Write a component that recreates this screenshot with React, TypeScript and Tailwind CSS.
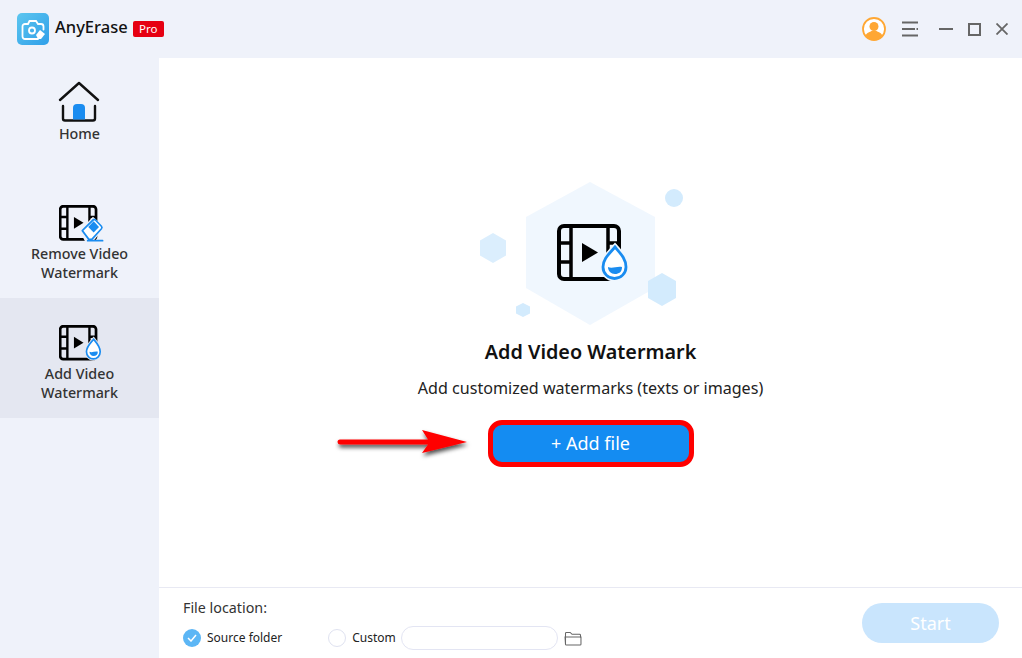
const FONT = "font-['Noto_Sans','Open_Sans',sans-serif]";

function FilmBase({ stroke = 4 }: { stroke?: number }) {
  return (
    <g>
      <rect x="2" y="2" width="60" height="53" rx="5" fill="none" stroke="#000" strokeWidth={stroke} />
      <path d="M14 2v53M51 2v53M2 19h12M2 38h12M51 19h11" stroke="#000" strokeWidth={stroke - 0.5} fill="none" />
      <path d="M25 19l16 9.500L25 38z" fill="#000" />
    </g>
  );
}

function Drop({ hole }: { hole: string }) {
  return (
    <g>
      <path
        d="M58 23c6 7 11 12 11 20a11.500 11.500 0 0 1-23 0c0-8 6-13 12-20z"
        fill={hole}
        stroke={hole}
        strokeWidth="6"
      />
      <path
        d="M58 23c6 7 11 12 11 20a11.500 11.500 0 0 1-23 0c0-8 6-13 12-20z"
        fill="#fff"
        stroke="#1a8cf0"
        strokeWidth="2.800"
      />
      <path d="M51 43c4 2 9-1 14 0c0 5-3 7-7 7s-7-3-7-7z" fill="#1a8cf0" />
    </g>
  );
}

function HomeIcon() {
  return (
    <svg width="42" height="42" viewBox="0 0 42 42" fill="none" className="shrink-0 -translate-x-[1px]">
      <path d="M2 19L21 2l19 17" stroke="#111" strokeWidth="2.400" strokeLinecap="round" strokeLinejoin="round" />
      <path d="M5 25v12.500a2 2 0 0 0 2 2h28a2 2 0 0 0 2-2V25" stroke="#111" strokeWidth="2.400" strokeLinecap="round" />
      <path d="M15 38.500V27a4 4 0 0 1 4-4h4a4 4 0 0 1 4 4v11.500z" fill="#1a8cf0" />
    </svg>
  );
}

function RemoveIcon() {
  return (
    <svg width="46" height="40" viewBox="0 0 77 64" fill="none" preserveAspectRatio="none" className="shrink-0">
      <FilmBase stroke={4.500} />
      <path d="M38 42l19-19 15 13-17 20H46z" fill="#eff2fa" stroke="#eff2fa" strokeWidth="6" />
      <path d="M39 41l18-17a3 3 0 0 1 4 0l10 10a3 3 0 0 1 0 4L55 55h-5z" fill="#fff" stroke="#1a8cf0" strokeWidth="2.800" strokeLinejoin="round" />
      <path d="M49 35l9-9 9 9-9 9z" fill="#1a8cf0" />
      <path d="M48 57h25" stroke="#1a8cf0" strokeWidth="2.800" strokeLinecap="round" />
    </svg>
  );
}

function AddIcon({ hole, big }: { hole: string; big?: boolean }) {
  return (
    <svg
      width={big ? 72 : 43}
      height={big ? 66 : 41}
      viewBox="0 0 72 66"
      fill="none"
      preserveAspectRatio="none"
      className={big ? "absolute left-[87px] top-[49px]" : "shrink-0"}
    >
      <FilmBase stroke={big ? 4 : 4.500} />
      <Drop hole={hole} />
    </svg>
  );
}

function Illustration() {
  return (
    <div className="relative mr-[22px] h-[155px] w-[220px]">
      <svg width="220" height="155" viewBox="0 0 220 155" className="absolute left-0 top-0">
        <path d="M120 7l65 35v71l-65 37-64-37V42z" fill="#f0f7fe" />
        <path d="M23 58l13 7.500v15L23 88l-13-7.500v-15z" fill="#dbeefd" />
        <path d="M53 128l7 3.500v7L53 142l-7-3.500v-7z" fill="#d3ebfd" />
        <path d="M192 98l14 8v17l-14 8-14-8v-17z" fill="#d3ebfd" />
        <circle cx="204" cy="23" r="9" fill="#d3ebfd" />
      </svg>
      <AddIcon hole="#f0f7fe" big />
    </div>
  );
}

function NavItem({ label, icon, active, top }: { label: string[]; icon: React.ReactNode; active?: boolean; top: string }) {
  return (
    <div className={`flex h-[120px] flex-col items-center pt-[22px] ${active ? "bg-[#e4e7f1]" : ""}`}>
      <div className={`flex h-[44px] w-[41px] items-start ${top}`}>{icon}</div>
      <div className="text-center text-[14.300px] leading-[19px] font-medium text-[#333]">
        {label.map((l) => (
          <div key={l}>{l}</div>
        ))}
      </div>
    </div>
  );
}

export default function App() {
  return (
    <div className={`relative flex h-[658px] w-[1022px] flex-col overflow-hidden bg-[#eff2fa] ${FONT}`}>
      {/* Title bar */}
      <div className="flex h-[58px] shrink-0 items-center justify-between pl-[17px] pr-[14px]">
        <div className="flex items-center">
          <svg width="32" height="32" viewBox="0 0 32 32" fill="none">
            <defs>
              <linearGradient id="logo" x1="0" y1="0" x2="1" y2="1">
                <stop offset="0" stopColor="#5cc6ef" />
                <stop offset="1" stopColor="#2f9fe9" />
              </linearGradient>
            </defs>
            <rect width="32" height="32" rx="5" fill="url(#logo)" />
            <path
              d="M21 26H8a2.500 2.500 0 0 1-2.500-2.500v-10A2.500 2.500 0 0 1 8 11h3l1.500-3h6.500l2 3h3a2.500 2.500 0 0 1 2.500 2.500v3"
              stroke="#fff"
              strokeWidth="1.800"
              strokeLinecap="round"
            />
            <circle cx="15" cy="17.500" r="3" stroke="#fff" strokeWidth="1.800" />
            <path d="M19 22l4-5 5 4-4 5h-3z" fill="#fff" />
          </svg>
          <span className="mb-[4px] ml-[6px] text-[16.500px] font-medium leading-none text-[#111]">AnyErase</span>
          <span className="ml-[5px] flex h-[16px] w-[31px] items-center justify-center rounded-[2px] bg-[#e60012] text-[11.500px] leading-none text-white">
            Pro
          </span>
        </div>
        <div className="flex items-center">
          <svg width="24" height="24" viewBox="0 0 24 24" fill="none">
            <circle cx="12" cy="12" r="11" fill="#fff" stroke="#ffa733" strokeWidth="1.800" />
            <circle cx="12" cy="9.500" r="4.500" fill="#ffa733" />
            <path d="M3.500 19c1-4 5-4 6-5h5c1 1 5 1 6 5a11 11 0 0 1-17 0z" fill="#ffa733" />
          </svg>
          <svg width="16" height="16" viewBox="0 0 16 16" className="ml-[16px]" fill="none">
            <path d="M0 1.500h16M0 8h13M14.500 8H16M0 14.500h16" stroke="#666" strokeWidth="1.800" />
          </svg>
          <svg width="14" height="14" viewBox="0 0 14 14" className="ml-[21px]" fill="none">
            <path d="M0 7h14" stroke="#666" strokeWidth="2" />
          </svg>
          <svg width="13" height="13" viewBox="0 0 13 13" className="ml-[15px]" fill="none">
            <rect x="1" y="1" width="11" height="11" stroke="#666" strokeWidth="2" />
          </svg>
          <svg width="12" height="12" viewBox="0 0 12 12" className="ml-[15px]" fill="none">
            <path d="M0.500 0.500l11 11M11.500 0.500l-11 11" stroke="#666" strokeWidth="1.800" />
          </svg>
        </div>
      </div>

      <div className="flex min-h-0 flex-1">
        {/* Sidebar */}
        <div className="w-[159px] shrink-0">
          <NavItem label={["Home"]} icon={<HomeIcon />} top="pt-[1px]" />
          <NavItem label={["Remove Video", "Watermark"]} icon={<RemoveIcon />} top="pt-[5px]" />
          <NavItem label={["Add Video", "Watermark"]} icon={<AddIcon hole="#e4e7f1" />} active top="pt-[5px]" />
        </div>

        {/* Main */}
        <div className="flex min-w-0 flex-1 flex-col bg-white">
          <div className="flex flex-1 flex-col items-center pt-[117px]">
            <Illustration />
            <h1 className="mt-[9px] text-[19.800px] font-semibold leading-[26px] text-[#111]">Add Video Watermark</h1>
            <p className="mt-[12px] text-[16.100px] leading-[22px] text-[#222]">Add customized watermarks (texts or images)</p>
            <button
              type="button"
              className="mt-[21px] flex h-[47px] w-[206px] items-center justify-center rounded-[14px] border-[5px] border-[#ff0000] bg-[#148cf2] text-[18px] text-white"
            >
              + Add file
            </button>
          </div>

          {/* Footer */}
          <div className="flex h-[71px] shrink-0 items-center justify-between border-t border-[#e8e9f3] pl-[24px] pr-[23px]">
            <div className="self-start pt-[11px]">
              <div className="text-[14.300px] leading-[18px] text-[#333]">File location:</div>
              <div className="mt-[9px] flex items-center">
                <span className="flex h-[18px] w-[18px] items-center justify-center rounded-full bg-[#5cb6f5]">
                  <svg width="10" height="8" viewBox="0 0 10 8" fill="none">
                    <path d="M1 4l3 3 5-6" stroke="#fff" strokeWidth="1.500" />
                  </svg>
                </span>
                <span className="ml-[6px] text-[12px] text-[#222]">Source folder</span>
                <span className="ml-[46px] h-[18px] w-[18px] rounded-full border border-[#dfe2f0] bg-white" />
                <span className="ml-[6px] text-[12px] text-[#222]">Custom</span>
                <span className="ml-[5px] h-[24px] w-[157px] rounded-full border border-[#e3e5f3] bg-white" />
                <svg width="18" height="15" viewBox="0 0 19 16" className="ml-[6px]" fill="none">
                  <path d="M1.500 14V2.500a1 1 0 0 1 1-1h4l2 2h8a1 1 0 0 1 1 1V7" stroke="#666" strokeWidth="1.100" />
                  <path d="M1 6.500h17V14a1 1 0 0 1-1 1H2.500a1 1 0 0 1-1-1z" stroke="#666" strokeWidth="1.100" />
                </svg>
              </div>
            </div>
            <div className="flex h-[40px] w-[137px] items-center justify-center rounded-[20px] bg-[#c9e5fd] text-[18px] text-white">
              Start
            </div>
          </div>
        </div>
      </div>

      {/* Annotation arrow */}
      <svg width="140" height="40" viewBox="0 0 140 40" className="absolute left-[335px] top-[424px]" fill="none">
        <defs>
          <filter id="shadow" x="-10%" y="-50%" width="120%" height="200%">
            <feDropShadow dx="1" dy="3" stdDeviation="2" floodColor="#000" floodOpacity="0.7" />
          </filter>
        </defs>
        <path
          d="M5 15.500H93L87 6l45 12-45 11 6-8.500H5a2.500 2.500 0 0 1 0-5z"
          fill="#ff0000"
          filter="url(#shadow)"
        />
      </svg>
    </div>
  );
}
